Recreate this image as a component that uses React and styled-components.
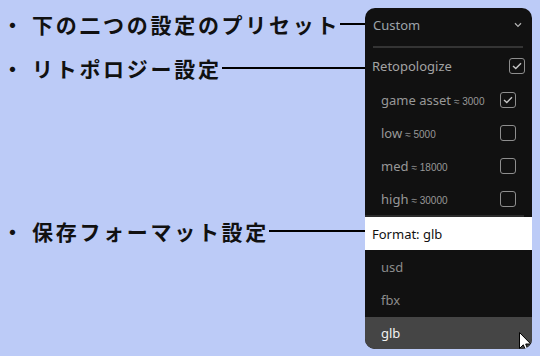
import React from "react";
import styled, { createGlobalStyle } from "styled-components";

const Global = createGlobalStyle`
  html, body { margin: 0; padding: 0; }
  body { background: #bccbf7; width: 540px; height: 356px; overflow: hidden; }
  * { box-sizing: border-box; }
`;

const Page = styled.div`
  display: flex;
  width: 540px;
  height: 356px;
  padding: 8px 8px 7px 0;
  background: #bccbf7;
`;

const Callouts = styled.div`
  flex: 1;
  display: flex;
  flex-direction: column;
`;

const Callout = styled.div`
  display: flex;
  align-items: center;
  height: 32px;
  margin-top: ${(p) => p.$gap || 0}px;
  padding-left: 2px;
  font-family: "Noto Sans CJK JP", sans-serif;
  font-weight: 700;
  font-size: 21px;
  color: #111;
`;

const Bullet = styled.span`
  display: inline-block;
  width: 30px;
`;

const CalloutText = styled.span`
  letter-spacing: 2.7px;
  white-space: nowrap;
`;

const Leader = styled.div`
  flex: 1;
  height: 2px;
  background: #000;
`;

const Panel = styled.div`
  position: relative;
  width: 167px;
  background: #111111;
  border-radius: 10px;
  overflow: hidden;
  display: flex;
  flex-direction: column;
  font-family: "Noto Sans", sans-serif;
  font-size: 13px;
`;

const Header = styled.div`
  height: 34px;
  display: flex;
  align-items: center;
  justify-content: space-between;
  padding: 0 10px 0 8px;
  color: #9ea4aa;
`;

const Separator = styled.div`
  height: 2px;
  margin: 4px 9px 0 8px;
  background: #343434;
`;

const Row = styled.div`
  height: ${(p) => p.$h || 33}px;
  flex-shrink: 0;
  display: flex;
  align-items: center;
  justify-content: space-between;
  padding: 0 ${(p) => p.$pr || 8}px 0 ${(p) => p.$pl || 8}px;
  color: ${(p) => p.$color || "#9c9c9c"};
  background: ${(p) => p.$bg || "transparent"};
`;

const SubList = styled.div`
  margin-right: 8px;
  border-bottom: 2px solid #2c2c2c;
`;

const Approx = styled.span`
  font-family: "Liberation Sans", Arial, sans-serif;
  font-size: 10px;
  margin-left: 3px;
`;

const Box = styled.span`
  width: 16px;
  height: 16px;
  border: 1.5px solid #8e8e8e;
  border-radius: 3px;
  display: flex;
  align-items: center;
  justify-content: center;
`;

const Cursor = styled.svg`
  position: absolute;
  right: 0;
  bottom: -4px;
`;

const Check = ({ on }) => (
  <Box>
    {on && (
      <svg width="10" height="8" viewBox="0 0 10 8">
        <path d="M1 4 L3.8 6.6 L9 1.2" fill="none" stroke="#c4c4c4" strokeWidth="1.4" />
      </svg>
    )}
  </Box>
);

const subs = [
  { name: "game asset", n: "3000", on: true },
  { name: "low", n: "5000" },
  { name: "med", n: "18000" },
  { name: "high", n: "30000" },
];

const labels = [
  { text: "下の二つの設定のプリセット", gap: 0 },
  { text: "リトポロジー設定", gap: 12 },
  { text: "保存フォーマット設定", gap: 131 },
];

export default function App() {
  return (
    <>
      <Global />
      <Page>
        <Callouts>
          {labels.map((l) => (
            <Callout key={l.text} $gap={l.gap}>
              <Bullet>・</Bullet>
              <CalloutText>{l.text}</CalloutText>
              <Leader />
            </Callout>
          ))}
        </Callouts>
        <Panel>
          <Header>
            <span>Custom</span>
            <svg width="8" height="6" viewBox="0 0 8 6">
              <path d="M1 1.2 L4 4.4 L7 1.2" fill="none" stroke="#b0b0b0" strokeWidth="1.3" />
            </svg>
          </Header>
          <Separator />
          <Row $h={35} $pl={7} $pr={7} $color="#a3a3a3">
            <span>Retopologize</span>
            <Check on />
          </Row>
          <SubList>
            {subs.map((s) => (
              <Row key={s.name} $pl={16} $pr={8} $color="#989898">
                <span>
                  {s.name}
                  <Approx>≈ {s.n}</Approx>
                </span>
                <Check on={s.on} />
              </Row>
            ))}
          </SubList>
          <Row $pl={7} $bg="#ffffff" $color="#111">Format: glb</Row>
          <Row $pl={16} $color="#8c8c8c">usd</Row>
          <Row $h={34} $pl={16} $color="#8c8c8c">fbx</Row>
          <Row $h={32} $pl={16} $bg="#454545" $color="#f2f2f2">glb</Row>
          <Cursor width="13" height="21" viewBox="0 0 13 21">
            <path d="M0.5 0.5 L0.5 16.5 L4.3 12.8 L7 19.3 L9.3 18.3 L6.7 12 L11.8 12 Z" fill="#fff" stroke="#000" strokeWidth="1" />
          </Cursor>
        </Panel>
      </Page>
    </>
  );
}
